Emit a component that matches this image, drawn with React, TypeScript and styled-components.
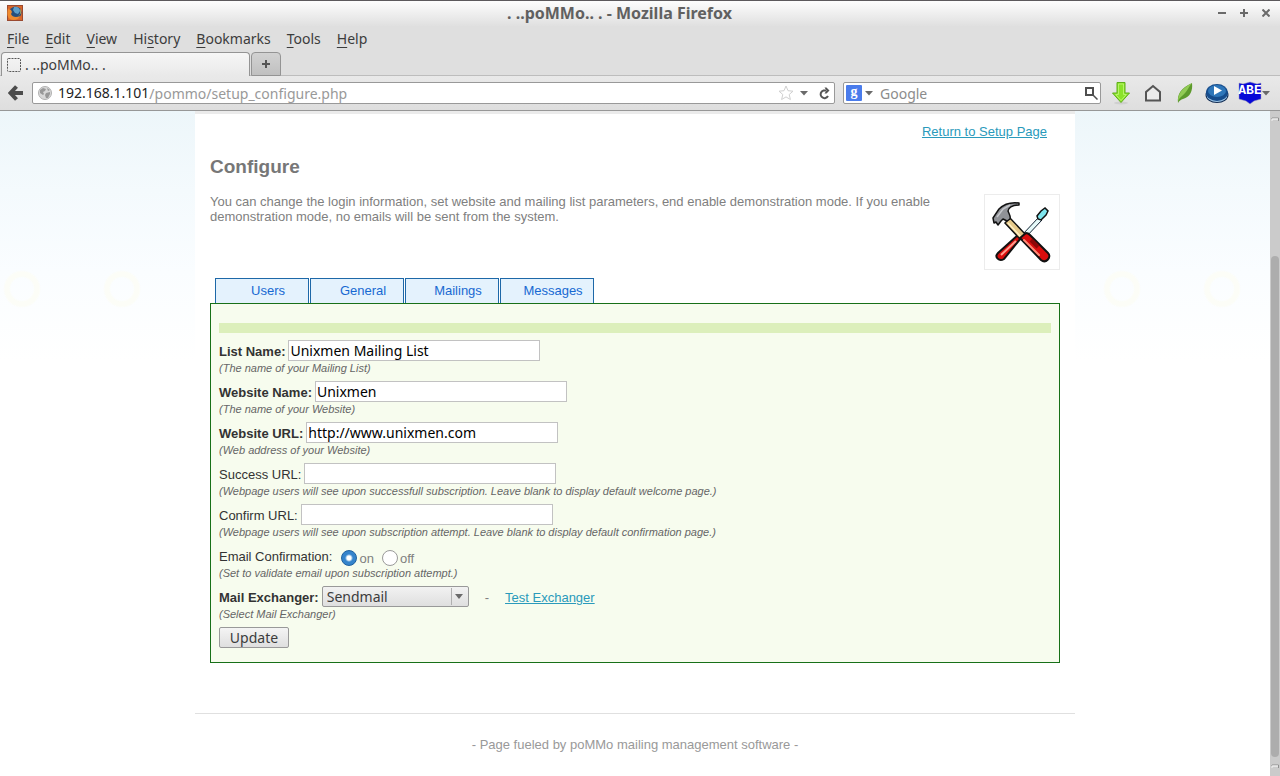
import React from "react";
import styled, { createGlobalStyle } from "styled-components";

const ui = `"Noto Sans", "Open Sans", sans-serif`;
const web = `"Liberation Sans", Arial, sans-serif`;

const Global = createGlobalStyle`
  *, *::before, *::after { box-sizing: border-box; }
  body { margin: 0; background: #fff; font-family: ${web}; }
  button, input, select { font: inherit; color: inherit; margin: 0; }
  h1, h2, p { margin: 0; }
`;

const Window = styled.div`
  display: flex;
  flex-direction: column;
  min-height: 100vh;
`;

const Chrome = styled.header`
  font-family: ${ui};
  font-size: 14px;
  color: #3c3c3c;
  background: #dfdfdf;
`;

const TitleBar = styled.div`
  display: flex;
  align-items: center;
  height: 26px;
  padding: 0 8px 2px 7px;
  border-top: 1px solid #5c595c;
  background: linear-gradient(#fdfdfd, #e0e0e0);
`;

const Title = styled.h1`
  flex: 1;
  text-align: center;
  font-size: 16px;
  line-height: 20px;
  font-weight: 700;
  color: #606060;
`;

const WindowButtons = styled.div`
  display: flex;
  gap: 10px;
`;

const IconButton = styled.button<{ $w: number }>`
  display: flex;
  align-items: center;
  justify-content: center;
  flex: none;
  width: ${(p) => p.$w}px;
  padding: 0;
  border: 0;
  background: none;
`;

const MenuBar = styled.nav`
  display: flex;
  gap: 16px;
  height: 26px;
  padding: 0 7px;
`;

const MenuButton = styled.button`
  padding: 0;
  border: 0;
  background: none;
  line-height: 24px;
  u { text-underline-offset: 3px; }
`;

const TabStrip = styled.div`
  display: flex;
  gap: 1px;
  height: 24px;
  padding-left: 1px;
  border-bottom: 1px solid #bdbdbd;
`;

const BrowserTab = styled.button`
  display: flex;
  align-items: center;
  gap: 4px;
  width: 249px;
  height: 24px;
  padding: 0 5px;
  border: 1px solid #949494;
  border-bottom: 0;
  border-radius: 4px 4px 0 0;
  background: linear-gradient(#f6f6f6, #e9e9e9);
`;

const NewTab = styled.button`
  display: flex;
  align-items: center;
  justify-content: center;
  width: 30px;
  height: 24px;
  padding: 0;
  border: 1px solid #949494;
  border-radius: 4px 4px 0 0;
  background: linear-gradient(#d2d2d2, #c0c0c0);
`;

const Toolbar = styled.div`
  display: flex;
  align-items: center;
  height: 35px;
  padding: 0 9px 0 8px;
  border-bottom: 1px solid #979797;
  background: linear-gradient(#e9e9e9, #dedede);
`;

const Field = styled.div`
  display: flex;
  align-items: center;
  height: 22px;
  border: 1px solid #999;
  border-radius: 2px;
  background: #fff;
`;

const AddressField = styled(Field)`
  flex: 1;
  margin: 0 8px;
  padding: 0 0 0 5px;
`;

const SearchField = styled(Field)`
  width: 258px;
  padding: 0 1px 0 2px;
`;

const Host = styled.span`
  padding-left: 6px;
  line-height: 20px;
  color: #222;
`;

const BareInput = styled.input`
  flex: 1;
  min-width: 0;
  height: 20px;
  padding: 0;
  border: 0;
  outline: 0;
  background: none;
  color: #999;
  &::placeholder { color: #8c8c8c; opacity: 1; }
`;

const SearchInput = styled(BareInput)`
  padding-left: 4px;
`;

const Addons = styled.div`
  display: flex;
  align-items: center;
  gap: 8px;
  margin-left: 8px;
`;

const Body = styled.div`
  flex: 1;
  display: flex;
`;

const Page = styled.main`
  flex: 1;
  display: flex;
  min-width: 0;
  font-size: 13px;
  line-height: 15px;
  color: #808080;
  background:
    radial-gradient(circle at 50% 50%, transparent 11px, #fcfdf7 13px, #fcfdf7 17px, transparent 19px) -28px 158px / 100px 40px repeat-x,
    linear-gradient(#edf6fa, #f4fafd 80px, #fafdff 160px, #fff 250px) 0 0 / 100% 250px no-repeat,
    #fff;
`;

const Sheet = styled.div`
  width: 880px;
  margin: 0 auto;
  border-top: 3px solid #ebebeb;
  background: #fff;
`;

const Content = styled.div`
  padding: 10px 15px 50px;
`;

const Link = styled.a`
  color: #2a9abb;
  text-decoration: underline;
`;

const TopLink = styled.div`
  padding-right: 13px;
  text-align: right;
`;

const Heading = styled.h2`
  margin: 16px 0 15px;
  font-size: 19px;
  line-height: 24px;
  color: #777;
`;

const Intro = styled.div`
  display: flex;
  justify-content: space-between;
  align-items: flex-start;
`;

const IntroText = styled.p`
  max-width: 730px;
`;

const Picture = styled.div`
  width: 76px;
  height: 76px;
  padding: 4px;
  border: 1px solid #ececec;
`;

const Tabs = styled.nav`
  display: flex;
  gap: 1px;
  margin-top: 8px;
  padding-left: 5px;
`;

const PageTab = styled.a`
  width: 94px;
  height: 25px;
  padding-left: 12px;
  border: 1px solid #1d68a8;
  border-bottom: 0;
  background: #e4f2fd;
  text-align: center;
  line-height: 23px;
  color: #1769d2;
  text-decoration: none;
`;

const Panel = styled.form`
  padding: 19px 8px 14px;
  border: 1px solid #187018;
  background: #f7fcee;
`;

const Band = styled.div`
  height: 10px;
  margin-bottom: 7px;
  background: #dcefbb;
`;

const Row = styled.div`
  margin-bottom: 5px;
`;

const Line = styled.div`
  display: flex;
  align-items: center;
  gap: 3px;
  height: 21px;
`;

const Label = styled.label<{ $strong?: boolean }>`
  padding-top: 2px;
  font-weight: ${(p) => (p.$strong ? 700 : 400)};
  color: #333;
`;

const Hint = styled.div`
  font-size: 11px;
  line-height: 15px;
  font-style: italic;
  color: #666;
`;

const TextInput = styled.input`
  width: 252px;
  height: 21px;
  padding: 0 1px;
  border: 1px solid #c2c2c2;
  outline: 0;
  background: #fff;
  font-family: ${ui};
  font-size: 14px;
  color: #000;
`;

const Choices = styled.div`
  display: flex;
  gap: 8px;
  padding: 5px 0 0 6px;
`;

const Choice = styled.label`
  display: flex;
  align-items: center;
  gap: 2px;
  line-height: 21px;
`;

const Radio = styled.input`
  appearance: none;
  width: 16px;
  height: 16px;
  border: 1px solid #9a9a9a;
  border-radius: 50%;
  background: #fff;
  &:checked {
    border-color: #1d5f9f;
    background: radial-gradient(circle, #fff 2px, #3584cc 4px);
  }
`;

const SelectBox = styled.div`
  display: grid;
  width: 147px;
  > * { grid-area: 1 / 1; }
  > svg { justify-self: end; pointer-events: none; }
`;

const Select = styled.select`
  appearance: none;
  width: 100%;
  height: 21px;
  padding: 0 4px;
  border: 1px solid #999;
  border-radius: 2px;
  background: linear-gradient(#f2f2f2, #dfdfdf);
  font-family: ${ui};
  font-size: 14px;
  line-height: 19px;
  color: #3c3c3c;
`;

const Dash = styled.span`
  padding: 2px 13px 0;
`;

const Submit = styled.button`
  width: 70px;
  height: 21px;
  padding: 0;
  border: 1px solid #999;
  border-radius: 2px;
  background: linear-gradient(#f4f4f4, #dfdfdf);
  font-family: ${ui};
  font-size: 14px;
  line-height: 19px;
  color: #3c3c3c;
  display: block;
`;

const Footer = styled.footer`
  padding: 23px 0;
  border-top: 1px solid #e0e0e0;
  text-align: center;
  color: #999;
`;

const Scrollbar = styled.div`
  display: flex;
  flex-direction: column;
  width: 10px;
  padding: 0 1px;
  background: #cbcbcb;
`;

const TrackSpace = styled.div`
  flex: 139;
  padding-top: 6px;
`;

const Thumb = styled.div`
  flex: 501;
  border-radius: 4px;
  background: #adadad;
`;

const TrackEnd = styled.div`
  height: 19px;
  padding-top: 7px;
`;

const FirefoxLogo = () => (
  <svg width="16" height="16" viewBox="0 0 16 16">
    <rect width="16" height="16" fill="#b5542b" />
    <rect x="0.5" y="0.5" width="15" height="15" fill="#d9672a" stroke="#9a4a30" />
    <circle cx="8.500" cy="7.500" r="6" fill="#274f7c" />
    <path d="M7 2c3-1 6 1 6 4l-2 3-3-1-2-3z" fill="#5e9fc9" />
    <path d="M1 3c1 2 2 2 3 2l1 2-1 2c1 3 5 4 9 2-1 4-7 5-10 3S0 8 1 3z" fill="#ef8b2e" />
    <path d="M13 4c1 3 0 6-2 7 3-1 4-5 2-7z" fill="#c8c15a" />
  </svg>
);

const Caret = () => (
  <svg width="8" height="5" viewBox="0 0 8 5"><path d="M0 0h8L4 4.500z" fill="#6a6a6a" /></svg>
);

const ArrowMark = () => (
  <svg width="8" height="5" viewBox="0 0 8 5" display="block">
    <path d="M1 3.500V1h6.500v3" fill="none" stroke="#8f8f8f" />
    <path d="M1 4V2h6" fill="none" stroke="#fff" />
  </svg>
);

const Globe = () => (
  <svg width="14" height="14" viewBox="0 0 14 14">
    <circle cx="7" cy="7" r="6.500" fill="#d8d8d8" stroke="#b0b0b0" />
    <path d="M2 4l3-2 3 1-1 2-2 1 1 2-1 1-3-2zM8 7l4-1v2l-2 4-2 0-1-3zM9 2l3 2-2 1z" fill="#989898" />
  </svg>
);

const Star = () => (
  <svg width="16" height="16" viewBox="0 0 16 16">
    <path d="M8 1l2 4.700 5 .5-3.800 3.300 1.200 5L8 11.900 3.600 14.500l1.200-5L1 6.200l5-.5z" fill="#fff" stroke="#d0d0d0" strokeLinejoin="round" />
  </svg>
);

const Reload = () => (
  <svg width="12" height="13" viewBox="0 0 12 13">
    <path d="M8 3.500H5.500a3.900 3.900 0 1 0 4.500 5.500" fill="none" stroke="#555" strokeWidth="2" />
    <path d="M6.500 0.500h2l3 3-3 3h-2l2-3z" fill="#555" />
  </svg>
);

const Back = () => (
  <svg width="16" height="16" viewBox="0 0 16 16">
    <path d="M8.500 1.500L2.500 8l6 6.500M2.500 8H15" fill="none" stroke="#4c4c4c" strokeWidth="4" strokeLinejoin="miter" />
  </svg>
);

const GoogleMark = () => (
  <svg width="16" height="16" viewBox="0 0 16 16">
    <rect width="16" height="16" rx="1" fill="#4a7cec" />
    <text x="8" y="11" textAnchor="middle" fontFamily="Liberation Serif, serif" fontWeight="700" fontSize="14" fill="#fff">g</text>
  </svg>
);

const Magnifier = () => (
  <svg width="13" height="13" viewBox="0 0 13 13">
    <rect x="1" y="1" width="7" height="7" fill="#fff" stroke="#4f4f4f" strokeWidth="2" />
    <path d="M8 8l4.500 4.500" stroke="#4f4f4f" strokeWidth="1.500" />
  </svg>
);

const Download = () => (
  <svg width="20" height="24" viewBox="0 0 20 24">
    <ellipse cx="10" cy="22" rx="7" ry="1.500" fill="#cfcfcf" />
    <path d="M6 1.500h8V12h4.500L10 21.500 1.500 12H6z" fill="#8be32a" stroke="#5fae1b" />
    <path d="M7.500 3h5v10.500h2.800L10 19.500l-5.300-6h2.800z" fill="none" stroke="#b7f46a" />
  </svg>
);

const Home = () => (
  <svg width="18" height="18" viewBox="0 0 18 18">
    <path d="M2 16.500V8L9 2l7 6v8.500z" fill="#ececec" stroke="#555" strokeWidth="2" />
  </svg>
);

const Leaf = () => (
  <svg width="16" height="22" viewBox="0 0 16 22">
    <path d="M1 21C0 12 4 6 15 1c1 8-2 14-9 16-2 .5-4 2-5 4z" fill="#5d9a2c" />
    <path d="M1 19C1 12 5 6 14.500 1.500 11 6 10 10 5 14c-2 1.500-3 3-4 5z" fill="#92cb55" />
  </svg>
);

const Play = () => (
  <svg width="24" height="22" viewBox="0 0 24 22">
    <ellipse cx="12" cy="13" rx="11.500" ry="8" fill="#0f2a52" />
    <ellipse cx="12" cy="13" rx="10.500" ry="7" fill="#9fc7e8" />
    <ellipse cx="12" cy="10.500" rx="11" ry="8.500" fill="#164c8c" />
    <ellipse cx="12" cy="9" rx="9" ry="6" fill="#2e76b9" />
    <path d="M9 4l8 4.500-8 4.500z" fill="#fff" />
  </svg>
);

const Shield = () => (
  <svg width="24" height="24" viewBox="0 0 24 24">
    <path d="M1 2l4 1 7-2 7 2 4-1v16l-7 2-4 3-4-3-7-2z" fill="#0808d8" stroke="#9a9ab8" strokeWidth="0.500" />
    <text x="12" y="13" textAnchor="middle" fontFamily="Liberation Mono, monospace" fontWeight="700" fontSize="13" fill="#fff">ABE</text>
  </svg>
);

const Tools = () => (
  <svg width="66" height="66" viewBox="0 0 66 66">
    <path d="M33 36L50 18l3 3-17 18z" fill="#e6fafa" stroke="#123" strokeWidth="1" />
    <path d="M49 20l-1-3 4-5 4-3 3 3-2 4-5 5z" fill="#7fe6ee" stroke="#111" strokeWidth="1.500" />
    <path d="M29 36L9 54c-4 4 1 9 6 6l17-21z" fill="#d90d0d" stroke="#111" strokeWidth="2" />
    <path d="M27 42L12 56" stroke="#ff9c8c" strokeWidth="2" />
    <path d="M16 24l5-5 16 17-6 4z" fill="#e6c98a" stroke="#111" strokeWidth="1.500" />
    <path d="M19 24l13 14" stroke="#fff0c4" strokeWidth="1.500" />
    <path d="M31 39l6-5c2 0 3 1 4 2l18 18c4 4-2 11-7 7z" fill="#d90d0d" stroke="#111" strokeWidth="2" />
    <path d="M35 41l15 15" stroke="#ff8a76" strokeWidth="2" strokeLinecap="round" />
    <path d="M42 41l7 7" stroke="#8e0808" strokeWidth="4" />
    <path d="M4 19l6-9c5-5 12-7 20-6v2c-7 0-11 3-11 6 1 3 3 5 2 8l-3 2-4-2-2 2-3 4-2-3-2 1z" fill="#909297" stroke="#111" strokeWidth="1.500" strokeLinejoin="round" />
    <path d="M8 18l6-8 7-4" fill="none" stroke="#c4c6ca" strokeWidth="1.500" />
  </svg>
);

const menus: [string, string, string][] = [
  ["", "F", "ile"],
  ["", "E", "dit"],
  ["", "V", "iew"],
  ["Hi", "s", "tory"],
  ["", "B", "ookmarks"],
  ["", "T", "ools"],
  ["", "H", "elp"],
];

const fields = [
  { id: "list", label: "List Name:", value: "Unixmen Mailing List", hint: "(The name of your Mailing List)", strong: true },
  { id: "site", label: "Website Name:", value: "Unixmen", hint: "(The name of your Website)", strong: true },
  { id: "url", label: "Website URL:", value: "http://www.unixmen.com", hint: "(Web address of your Website)", strong: true },
  { id: "success", label: "Success URL:", value: "", hint: "(Webpage users will see upon successfull subscription. Leave blank to display default welcome page.)", strong: false },
  { id: "confirm", label: "Confirm URL:", value: "", hint: "(Webpage users will see upon subscription attempt. Leave blank to display default confirmation page.)", strong: false },
];

export default function App() {
  return (
    <Window>
      <Global />
      <Chrome>
        <TitleBar>
          <FirefoxLogo />
          <Title>. ..poMMo.. . - Mozilla Firefox</Title>
          <WindowButtons>
            <IconButton $w={12} aria-label="Minimize">
              <svg width="8" height="8"><path d="M0 4h8" stroke="#6a6a6a" strokeWidth="2" /></svg>
            </IconButton>
            <IconButton $w={12} aria-label="Maximize">
              <svg width="8" height="8"><path d="M0 4h8M4 0v8" stroke="#6a6a6a" strokeWidth="2" /></svg>
            </IconButton>
            <IconButton $w={12} aria-label="Close">
              <svg width="8" height="8"><path d="M0.500 0.500l7 7M7.500 0.500l-7 7" stroke="#6a6a6a" strokeWidth="2" /></svg>
            </IconButton>
          </WindowButtons>
        </TitleBar>
        <MenuBar>
          {menus.map(([a, key, b]) => (
            <MenuButton key={b}>{a}<u>{key}</u>{b}</MenuButton>
          ))}
        </MenuBar>
        <TabStrip>
          <BrowserTab>
            <svg width="14" height="14"><rect x="0.500" y="0.500" width="13" height="13" rx="1" fill="none" stroke="#555" strokeDasharray="2 1" /></svg>
            . ..poMMo.. .
          </BrowserTab>
          <NewTab aria-label="New tab">
            <svg width="8" height="8"><path d="M0 4h8M4 0v8" stroke="#555" strokeWidth="2" /></svg>
          </NewTab>
        </TabStrip>
        <Toolbar>
          <IconButton $w={16} aria-label="Back"><Back /></IconButton>
          <AddressField>
            <Globe />
            <Host>192.168.1.101</Host>
            <BareInput aria-label="Address" defaultValue="/pommo/setup_configure.php" />
            <IconButton $w={16} aria-label="Bookmark this page"><Star /></IconButton>
            <IconButton $w={20} aria-label="Show history"><Caret /></IconButton>
            <IconButton $w={20} aria-label="Reload"><Reload /></IconButton>
          </AddressField>
          <SearchField>
            <GoogleMark />
            <IconButton $w={14} aria-label="Search engine"><Caret /></IconButton>
            <SearchInput aria-label="Search" placeholder="Google" />
            <IconButton $w={16} aria-label="Search"><Magnifier /></IconButton>
          </SearchField>
          <Addons>
            <IconButton $w={24} aria-label="Downloads"><Download /></IconButton>
            <IconButton $w={24} aria-label="Home"><Home /></IconButton>
            <IconButton $w={24} aria-label="Leaf"><Leaf /></IconButton>
            <IconButton $w={24} aria-label="Play"><Play /></IconButton>
            <IconButton $w={34} aria-label="ABE"><Shield /><Caret /></IconButton>
          </Addons>
        </Toolbar>
      </Chrome>
      <Body>
        <Page>
          <Sheet>
            <Content>
              <TopLink><Link href="#setup">Return to Setup Page</Link></TopLink>
              <Heading>Configure</Heading>
              <Intro>
                <IntroText>
                  You can change the login information, set website and mailing list parameters, end enable demonstration mode. If you enable demonstration mode, no emails will be sent from the system.
                </IntroText>
                <Picture><Tools /></Picture>
              </Intro>
              <Tabs>
                {["Users", "General", "Mailings", "Messages"].map((name) => (
                  <PageTab key={name} href={`#${name}`}>{name}</PageTab>
                ))}
              </Tabs>
              <Panel onSubmit={(e) => e.preventDefault()}>
                <Band />
                {fields.map((f) => (
                  <Row key={f.id}>
                    <Line>
                      <Label htmlFor={f.id} $strong={f.strong}>{f.label}</Label>
                      <TextInput id={f.id} defaultValue={f.value} />
                    </Line>
                    <Hint>{f.hint}</Hint>
                  </Row>
                ))}
                <Row>
                  <Line>
                    <Label as="span">Email Confirmation:</Label>
                    <Choices>
                      <Choice><Radio type="radio" name="confirmation" defaultChecked />on</Choice>
                      <Choice><Radio type="radio" name="confirmation" />off</Choice>
                    </Choices>
                  </Line>
                  <Hint>(Set to validate email upon subscription attempt.)</Hint>
                </Row>
                <Row>
                  <Line>
                    <Label htmlFor="exchanger" $strong>Mail Exchanger:</Label>
                    <SelectBox>
                      <Select id="exchanger" defaultValue="Sendmail">
                        <option>Sendmail</option>
                      </Select>
                      <svg width="18" height="21"><path d="M0.500 2v17" stroke="#b0b0b0" /><path d="M4 8h8l-4 5z" fill="#6a6a6a" /></svg>
                    </SelectBox>
                    <Dash>-</Dash>
                    <Label as="span"><Link href="#test">Test Exchanger</Link></Label>
                  </Line>
                  <Hint>(Select Mail Exchanger)</Hint>
                </Row>
                <Submit type="submit">Update</Submit>
              </Panel>
            </Content>
            <Footer>- Page fueled by poMMo mailing management software -</Footer>
          </Sheet>
        </Page>
        <Scrollbar>
          <TrackSpace><ArrowMark /></TrackSpace>
          <Thumb />
          <TrackEnd><ArrowMark /></TrackEnd>
        </Scrollbar>
      </Body>
    </Window>
  );
}
